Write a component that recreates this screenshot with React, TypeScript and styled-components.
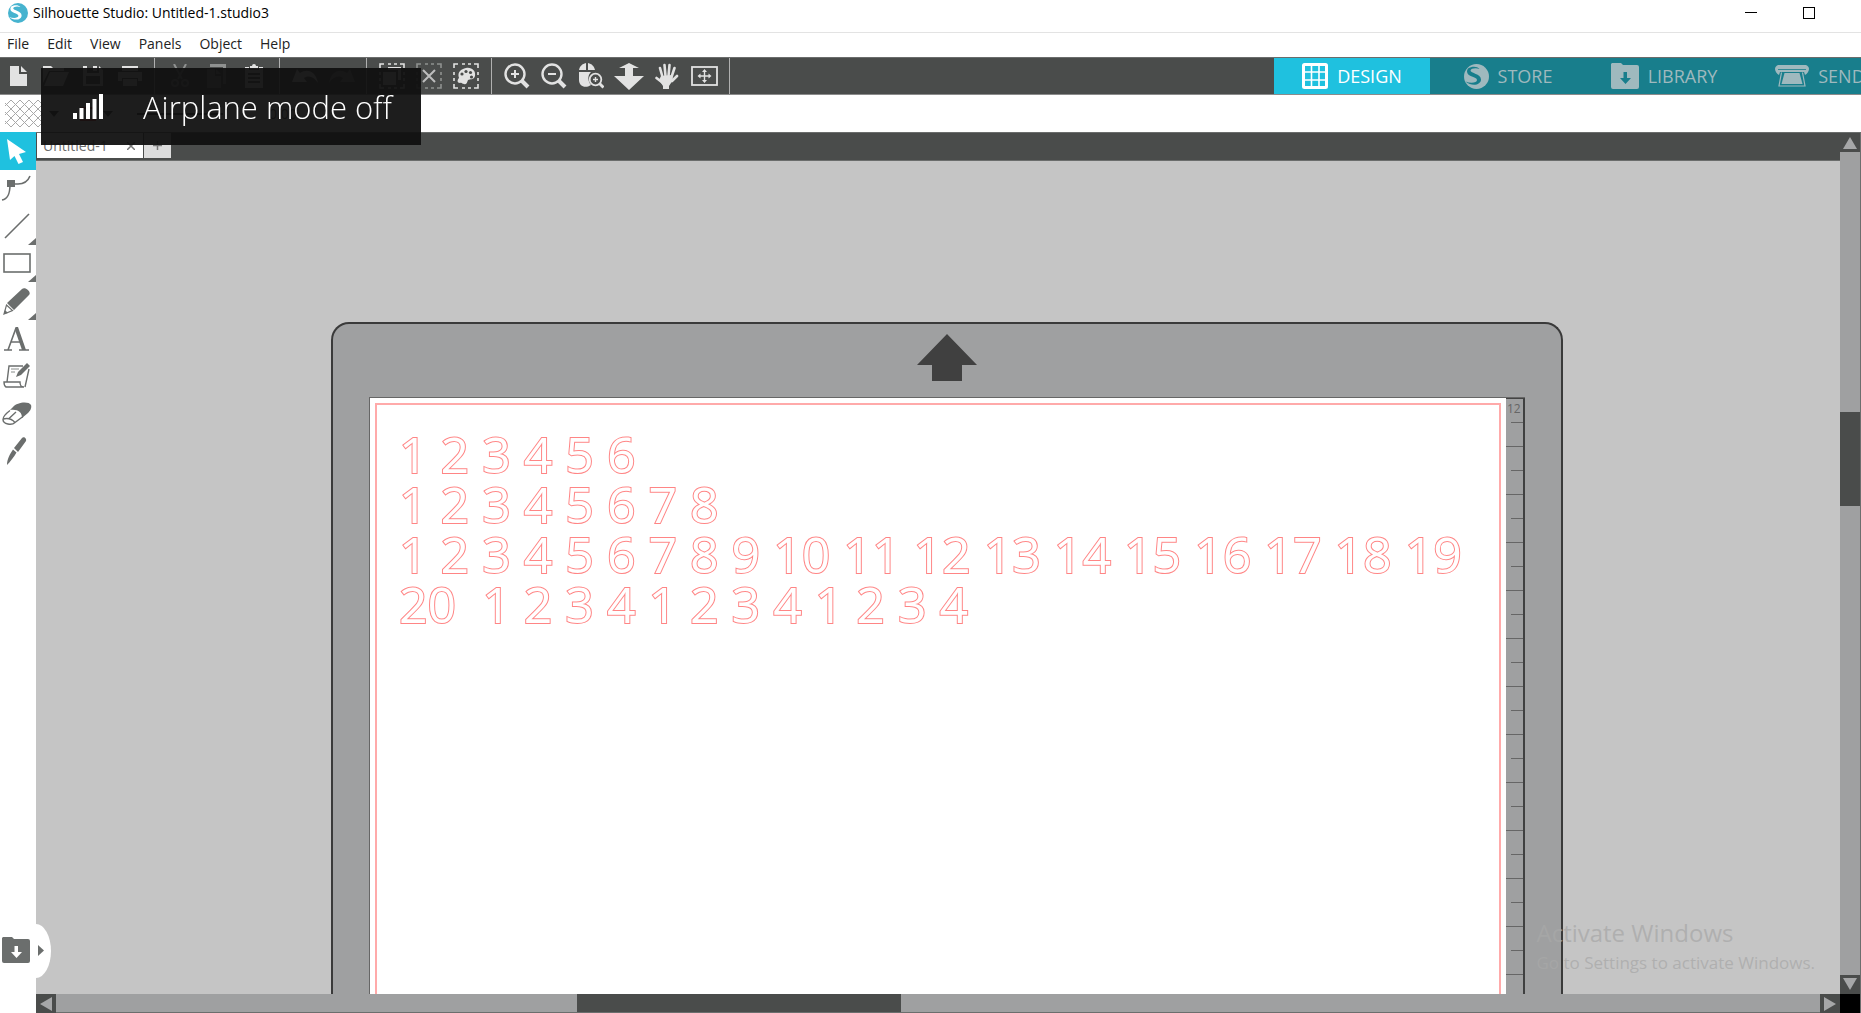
import React from 'react';
import styled, { createGlobalStyle, css } from 'styled-components';

const c = {
  bar: '#4a4c4b',
  barEdge: '#6b6d6c',
  light: '#e2e2e2',
  dim: '#8f9190',
  cyan: '#1fc1df',
  teal: '#187e8c',
  tealInk: '#9fb9be',
  canvas: '#c5c5c5',
  mat: '#9fa0a1',
  tool: '#6b6e6d',
  cut: '#ff8585',
};
const ui = `'Open Sans', 'Noto Sans', sans-serif`;

const Global = createGlobalStyle`
  *, *::before, *::after { box-sizing: border-box; }
  body { margin: 0; background: #fff; font-family: ${ui}; overflow: hidden; }
  button { font: inherit; padding: 0; border: 0; background: none; color: inherit; }
  svg { display: block; flex: none; }
`;

const Window = styled.div`
  height: 100vh;
  display: flex;
  flex-direction: column;
  background: #fff;
`;
const TitleBar = styled.header`
  display: flex;
  align-items: center;
  height: 33px;
  padding: 0 0 7px 8px;
  border-bottom: 1px solid #e3e3e3;
  gap: 5px;
`;
const Logo = styled.span`
  color: #46b3cf;
`;
const Title = styled.h1`
  flex: 1;
  margin: 0;
  font-size: 14px;
  line-height: 20px;
  font-weight: 400;
  color: #000;
`;
const WindowButtons = styled.div`
  display: flex;
  padding-right: 23px;
`;
const WindowButton = styled.button`
  width: 58px;
  height: 24px;
  display: grid;
  place-items: center;
`;
const MenuBar = styled.nav`
  display: flex;
  align-items: center;
  height: 24px;
  padding: 0 7px 2px;
  gap: 18px;
`;
const MenuItem = styled.button`
  font-size: 14px;
  line-height: 20px;
  color: #222;
`;
const Toolbar = styled.div`
  display: flex;
  height: 38px;
  background: ${c.bar};
  border-top: 1px solid ${c.barEdge};
  border-bottom: 1px solid #8b8b8b;
`;
const ToolGroup = styled.div<{ $width: number; $lead?: number }>`
  display: grid;
  grid-auto-flow: column;
  grid-auto-columns: 1fr;
  width: ${(p) => p.$width}px;
  padding: 0 6px 0 ${(p) => p.$lead ?? 6}px;
  border-right: 1px solid #b0b0b0;
`;
const ToolButton = styled.button<{ $dim?: boolean }>`
  display: grid;
  place-items: center;
  color: ${(p) => (p.$dim ? c.dim : c.light)};
`;
const Modes = styled.nav`
  display: flex;
  margin-left: auto;
  width: 587px;
  overflow: hidden;
  background: ${c.teal};
`;
const ModeButton = styled.button<{ $active?: boolean }>`
  display: flex;
  flex: none;
  align-items: center;
  justify-content: center;
  gap: 9px;
  width: 156px;
  font-size: 18px;
  line-height: 24px;
  color: ${(p) => (p.$active ? '#fff' : c.tealInk)};
  background: ${(p) => (p.$active ? c.cyan : 'transparent')};
`;
const StyleBar = styled.div`
  display: flex;
  align-items: center;
  height: 37px;
  padding-left: 5px;
  gap: 6px;
  color: #333;
`;
const LineStyle = styled.div`
  width: 86px;
  height: 2px;
  margin: 0 40px 0 18px;
  background: #333;
`;
const Thickness = styled.input`
  width: 100px;
  border: 0;
  padding: 0;
  font: 14px ${ui};
  color: #333;
`;
const Workspace = styled.div`
  flex: 1;
  min-height: 0;
  display: grid;
  grid-template-columns: 36px minmax(0, 1fr) 20px;
  border-right: 1px solid ${c.tool};
`;
const Sidebar = styled.aside`
  position: relative;
  background: #fff;
  display: flex;
  flex-direction: column;
`;
const ToolList = styled.div`
  display: grid;
  grid-template-rows: repeat(9, 1fr);
  height: 338px;
`;
const SideButton = styled.button<{ $active?: boolean; $more?: boolean }>`
  position: relative;
  display: flex;
  align-items: center;
  padding-left: 1px;
  color: ${(p) => (p.$active ? '#fff' : c.tool)};
  background: ${(p) => (p.$active ? c.cyan : '#fff')};
  ${(p) =>
    p.$more &&
    css`
      &::after {
        content: '';
        position: absolute;
        right: 0;
        bottom: 0;
        border-left: 8px solid transparent;
        border-bottom: 7px solid ${c.tool};
      }
    `}
`;
const LibraryHandle = styled.button`
  position: absolute;
  left: 0;
  bottom: 35px;
  z-index: 2;
  display: flex;
  align-items: center;
  gap: 8px;
  width: 51px;
  height: 54px;
  padding: 0 0 2px 2px;
  background: #fff;
  color: ${c.tool};
  border-radius: 0 15px 15px 0 / 0 27px 27px 0;
`;
const Center = styled.div`
  display: flex;
  flex-direction: column;
  min-width: 0;
`;
const Tabs = styled.div`
  display: flex;
  height: 29px;
  gap: 1px;
  padding: 0 0 2px 1px;
  background: ${c.bar};
  border-top: 1px solid ${c.barEdge};
  border-bottom: 1px solid ${c.barEdge};
`;
const Tab = styled.div`
  display: flex;
  align-items: center;
  justify-content: space-between;
  width: 106px;
  padding: 0 8px 0 6px;
  background: #fff;
  color: #6b6b6b;
  font-size: 14px;
  line-height: 20px;
`;
const TabButton = styled.button`
  display: grid;
  place-items: center;
  color: #777;
`;
const AddTab = styled(TabButton)`
  width: 27px;
  background: #dcdcdc;
`;
const Canvas = styled.main`
  position: relative;
  flex: 1;
  min-height: 0;
  display: flex;
  overflow: hidden;
  padding: 161px 277px 0 295px;
  background: ${c.canvas};
`;
const Mat = styled.section`
  flex: 1;
  min-width: 0;
  display: flex;
  flex-direction: column;
  padding: 10px 36px 0;
  background: ${c.mat};
  border: 2px solid #3a3a3a;
  border-bottom: 0;
  border-radius: 18px 18px 0 0;
`;
const FeedArrow = styled.svg`
  align-self: center;
  margin-bottom: 16px;
`;
const Sheet = styled.div`
  flex: 1;
  display: flex;
  border: 1px solid #666;
  border-width: 1px 0 0 1px;
`;
const Page = styled.div`
  flex: 1;
  min-width: 0;
  display: flex;
  padding: 5px 5px 0;
  background: #fff;
`;
const CutArea = styled.div`
  flex: 1;
  min-width: 0;
  padding: 24px 22px;
  border: 2px solid #ffaaaa;
  border-bottom: 0;
`;
const Numbers = styled.p`
  margin: 0;
  font-family: 'Open Sans', 'Noto Sans', sans-serif;
  font-size: 50px;
  line-height: 50px;
  white-space: pre;
  color: #fff;
  -webkit-text-stroke: 2px ${c.cut};
  paint-order: stroke fill;
`;
const Ruler = styled.div`
  width: 19px;
  padding: 3px 0 0 1px;
  overflow: hidden;
  font-size: 12px;
  line-height: 14px;
  color: #666;
  border-top: 1px solid #444;
  border-right: 2px solid #3f4040;
  background:
    repeating-linear-gradient(transparent 0 47px, #666 47px 48px) 0 0 / 100% 100%,
    repeating-linear-gradient(transparent 0 23px, #666 23px 24px) 5px 0 / 100% 100% no-repeat;
`;
const Watermark = styled.div`
  position: absolute;
  right: 25px;
  bottom: 17px;
  color: rgba(168, 168, 168, 0.75);
  font-size: 17px;
  line-height: 28px;
`;
const WatermarkTitle = styled.div`
  font-size: 24px;
  line-height: 32px;
`;
const Bar = styled.div<{ $vertical?: boolean }>`
  display: flex;
  flex-direction: ${(p) => (p.$vertical ? 'column' : 'row')};
  ${(p) => (p.$vertical ? 'border-top' : 'border-bottom')}: 1px solid ${c.tool};
  background: ${c.mat};
  ${(p) => (p.$vertical ? '' : 'height: 19px;')}
`;
const Track = styled.div<{ $share: number }>`
  flex: ${(p) => p.$share} 1 0;
`;
const Thumb = styled(Track)`
  background: ${c.bar};
`;
const ScrollButton = styled.button`
  flex: none;
  width: 20px;
  height: 19px;
  display: grid;
  place-items: center;
  background: ${c.bar};
  color: #a6a7a8;
`;
const Corner = styled.div`
  height: 19px;
  background: #000;
`;
const Toast = styled.div`
  position: fixed;
  left: 41px;
  top: 68px;
  z-index: 5;
  display: flex;
  align-items: center;
  gap: 40px;
  width: 380px;
  height: 77px;
  padding: 0 0 0 32px;
  background: rgba(16, 16, 16, 0.945);
  color: #fff;
  font-size: 31px;
  font-weight: 300;
  line-height: 40px;
  white-space: nowrap;
`;

type IconProps = { w: number; h: number; children: React.ReactNode };
const Icon = ({ w, h, children }: IconProps) => (
  <svg width={w} height={h} viewBox={`0 0 ${w} ${h}`} fill="currentColor" aria-hidden="true">
    {children}
  </svg>
);
const line = (width = 2) => ({ fill: 'none', stroke: 'currentColor', strokeWidth: width });

const Dashed = () => (
  <path d="M1 5V1h4M9 1h3M15 1h3M21 1h4v4M25 9v3M25 15v3M25 21v4h-4M18 25h-3M12 25H9M5 25H1v-4M1 18v-3M1 12V9" {...line(1.6)} />
);

const NewDoc = () => (
  <Icon w={17} h={20}><path d="M0 0h9v8h8v12H0zM11 0l6 6h-6z" /></Icon>
);
const Folder = () => (
  <Icon w={26} h={20}><path d="M0 0h8l2 2h11v3H6L0 17zM7 6h19l-6 14H1z" /></Icon>
);
const Save = () => (
  <Icon w={20} h={20}><path fillRule="evenodd" d="M0 0h4v7h12V0l4 4v16H0zM10 0h4v5h-4zM3 10h14v8H3z" /></Icon>
);
const Print = () => (
  <Icon w={24} h={20}><path d="M4 0h16v5H4zM0 6h24v9h-4v-3H4v3H0zM5 13h14v7H5z" /></Icon>
);
const Cut = () => (
  <Icon w={18} h={24}>
    <path d="M3 0l8 15M15 0L7 15" {...line(2)} />
    <circle cx="4" cy="19" r="3" {...line(2)} /><circle cx="14" cy="19" r="3" {...line(2)} />
  </Icon>
);
const Copy = () => (
  <Icon w={19} h={24}><path d="M3 0h16v20h-3V3H3zM0 5h8v7h6v12H0zM9 5l5 5H9z" /></Icon>
);
const Paste = () => (
  <Icon w={18} h={24}><path fillRule="evenodd" d="M0 3h4v3h10V3h4v21H0zM5 2h2a2 2 0 014 0h2v3H5zM3 9h12v2H3zM3 13h12v2H3zM3 17h12v2H3z" /></Icon>
);
const Undo = () => (
  <Icon w={26} h={16}><path d="M0 14L5 1l3 4c7-5 16-2 18 10-4-6-9-8-14-5l3 4z" /></Icon>
);
const Redo = () => (
  <Icon w={26} h={16}><path d="M26 14L21 1l-3 4C11 0 2 3 0 15c4-6 9-8 14-5l-3 4z" /></Icon>
);
const SelectAll = () => (
  <Icon w={26} h={26}><Dashed /><path d="M4 9h13v13H4zM9 4h13v13h-3V7H9z" /></Icon>
);
const Deselect = () => (
  <Icon w={26} h={26}><Dashed /><path d="M7 7l12 12M19 7L7 19" stroke="#bdbdbd" strokeWidth="2" /></Icon>
);
const Palette = () => (
  <Icon w={26} h={26}>
    <Dashed />
    <path d="M13 5c6-1 10 3 9 8-1 4-5 3-7 4-1 2-1 5-4 4-2 0-2-2-4-1-3 0-3-3-1-5C4 9 8 6 13 5z" />
    <g fill={c.bar}><circle cx="9" cy="11" r="1.6" /><circle cx="13" cy="8.5" r="1.6" /><circle cx="17.5" cy="9.5" r="1.6" /><circle cx="18.5" cy="14" r="1.6" /></g>
  </Icon>
);
const Zoom = ({ plus }: { plus?: boolean }) => (
  <Icon w={26} h={26}>
    <circle cx="11" cy="11" r="9.5" {...line(2.4)} />
    <path d="M17.5 17.5l6.5 6.5" {...line(4)} />
    <path d={plus ? 'M7 11h8M11 7v8' : 'M7 11h8'} {...line(2)} />
  </Icon>
);
const ZoomMouse = () => (
  <Icon w={25} h={26}>
    <path d="M7 0v7H0C1 3 3 1 7 0zM9 0c4 1 6 3 7 7H9zM0 9h12c-3 3-4 8 0 13-6 4-12 1-12-5z" />
    <circle cx="16.5" cy="16.5" r="5.8" {...line(1.8)} />
    <path d="M20.5 20.5l4 4" {...line(3)} /><path d="M14 16.5h5M16.500 14v5" {...line(1.4)} />
  </Icon>
);
const FitArrow = () => (
  <Icon w={30} h={27}><path d="M15 0l10 5h-6v8h11L15 27 0 13h11V5H5z" /></Icon>
);
const Hand = () => (
  <Icon w={24} h={26}>
    <g fill="none" stroke="currentColor" strokeWidth="2.600" strokeLinecap="round">
      <path d="M7.500 14L5 5M10.500 13L9.500 2M13.500 13l1-11M16.500 14l3-9M17 18l5-5M8 20l-6.500-5" />
    </g>
    <path d="M6 13l11-1 1 5-4 6v3H8v-3l-4-6z" />
  </Icon>
);
const Frame = () => (
  <Icon w={27} h={20}>
    <rect x="1" y="1" width="25" height="18" {...line(1.8)} />
    <path d="M8 10h11M13.500 5v10" {...line(1.4)} />
    <path d="M13.500 3l2.500 3h-5zM13.500 17l2.500-3h-5zM6.500 10l3-2.500v5zM20.500 10l-3-2.500v5z" />
  </Icon>
);
const Grid = () => (
  <Icon w={26} h={26}>
    <rect x="1.500" y="1.500" width="23" height="23" rx="1" {...line(3)} />
    <path d="M9.500 2v22M17 2v22M2 9h22M2 17h22" {...line(1.6)} />
  </Icon>
);
const Globe = ({ size, ink }: { size: number; ink: string }) => (
  <svg width={size} height={size} viewBox="0 0 25 25" fill="currentColor" aria-hidden="true">
    <circle cx="12.500" cy="12.500" r="12.500" />
    <path d="M4 4.500C8 2 13 2 15.500 5c-4-1.500-8.500-.5-9 1.500 0 3 10.500 3 10.500 9 0 5.500-9 7.500-15.500 2 5 2 11.500 1.500 11.500-1.500C13 12.500 3 13 3 7.500c0-1 .3-2 1-3z" fill={ink} />
  </svg>
);
const FolderDown = ({ ink }: { ink: string }) => (
  <Icon w={28} h={26}>
    <path d="M1 0h9l2 2h14a2 2 0 012 2v20a2 2 0 01-2 2H2a2 2 0 01-2-2V1z" />
    <path d="M12.500 9h3.500v6h4l-5.500 6L9 15h3.500z" fill={ink} />
  </Icon>
);
const Cutter = () => (
  <Icon w={34} h={22}>
    <path d="M3 0h28c2 1 3 2 3 4s-2 5-4 6l-1-3H5l-1 3C2 9 0 6 0 4s1-3 3-4z" />
    <path d="M3 4.500h28" stroke={c.teal} strokeWidth=".8" />
    <path d="M9.500 8h15l3 11h-21z" />
    <path d="M6.500 7.500L4 21h26L27.500 7.500" {...line(1.2)} />
  </Icon>
);
const Hatch = () => (
  <Icon w={38} h={27}>
    <path
      d="M0 6l6-6M0 15L15 0M0 24L24 0M6 27L33 0M15 27L38 4M24 27l14-14M33 27l5-5M0 21l6 6M0 12l15 15M0 3l24 24M6 0l27 27M15 0l23 23M24 0l14 14M33 0l5 5"
      fill="none" stroke="#a8a8a8" strokeWidth="1"
    />
  </Icon>
);
const Caret = () => <Icon w={10} h={6}><path d="M0 0h10L5 6z" /></Icon>;
const Signal = () => (
  <Icon w={30} h={25}><path d="M0 19h4v6H0zM6.500 14h4v11h-4zM13 9h4v16h-4zM19.500 5h4v20h-4zM26 0h4v25h-4z" /></Icon>
);

const Pointer = () => (
  <Icon w={32} h={32}><path d="M6 4l19 13-7 2 4 8-4.500 2-4-8L9 25z" /></Icon>
);
const EditNode = () => (
  <Icon w={32} h={28}>
    <path d="M1 26c6-1 8-6 8-16h8c7 0 10-3 12-8" {...line(1.600)} /><path d="M6 6h8v7H6z" />
  </Icon>
);
const LineTool = () => <Icon w={32} h={28}><path d="M4 26L28 2" {...line(1.6)} /></Icon>;
const RectTool = () => <Icon w={32} h={26}><rect x="3" y="4" width="26" height="18" {...line(1.6)} /></Icon>;
const Pencil = () => (
  <Icon w={32} h={28}>
    <path d="M21 2c3-3 10 3 7 6L13 23l-7-7z" /><path d="M5.500 18l6 5.500L3 27z" {...line(1.200)} /><path d="M3 27l1-4 3 3z" />
  </Icon>
);
const TextTool = () => (
  <Icon w={32} h={26}>
    <path d="M15 2L7 24M9.500 16h12" {...line(1.600)} /><path d="M14.500 1h2.500l8 23h-4L14 4z" />
    <path d="M3 24h8M18 24h10" {...line(1.600)} />
  </Icon>
);
const Sketch = () => (
  <Icon w={32} h={28}>
    <path d="M22 4H8L6 20M28 7l-4 18M3 20h16c0 4 1 5 4 5H5c-2-1-2-3-2-5z" {...line(1.400)} />
    <path d="M10 7h8M10 10h4" {...line(.8)} />
    <path d="M26 1l3 3-9 9-5 2 2-5z" />
  </Icon>
);
const Eraser = () => (
  <Icon w={32} h={26}>
    <path d="M12 6c4-5 16-6 18-2 1 3-1 6-3 8l-6 5c0-6-4-9-12-8z" />
    <path d="M9 9.500c-4 3-7 6-7 9 0 5 9 6 12 3l8-6M2 18c4-1 9 0 12 3.500M8 17.500L15 11" {...line(1.400)} />
  </Icon>
);
const Knife = () => (
  <Icon w={32} h={30}><path d="M21 2c2-2 5 1 4 3l-8 11-4-4zM12 13.500l3.500 3C13 21 9 26 6 29c0-6 3-11 6-15.500z" /></Icon>
);

const sideTools: { name: string; icon: React.ReactNode; more?: boolean }[] = [
  { name: 'Select', icon: <Pointer /> },
  { name: 'Edit points', icon: <EditNode /> },
  { name: 'Line', icon: <LineTool />, more: true },
  { name: 'Rectangle', icon: <RectTool />, more: true },
  { name: 'Freehand', icon: <Pencil />, more: true },
  { name: 'Text', icon: <TextTool /> },
  { name: 'Sketch', icon: <Sketch /> },
  { name: 'Eraser', icon: <Eraser /> },
  { name: 'Knife', icon: <Knife /> },
];

type Tool = [name: string, icon: React.ReactNode, dim?: boolean];
const groups: { width: number; lead?: number; tools: Tool[] }[] = [
  { width: 155, lead: 0, tools: [['New', <NewDoc />], ['Open', <Folder />], ['Save', <Save />], ['Print', <Print />]] },
  { width: 125, tools: [['Cut', <Cut />, true], ['Copy', <Copy />, true], ['Paste', <Paste />]] },
  { width: 87, tools: [['Undo', <Undo />], ['Redo', <Redo />, true]] },
  { width: 125, tools: [['Select all', <SelectAll />], ['Deselect', <Deselect />, true], ['Select by color', <Palette />]] },
  {
    width: 238,
    tools: [
      ['Zoom in', <Zoom plus />], ['Zoom out', <Zoom />], ['Zoom selection', <ZoomMouse />],
      ['Drag zoom', <FitArrow />], ['Pan', <Hand />], ['Fit to page', <Frame />],
    ],
  },
];

const rows = [
  '1 2 3 4 5 6',
  '1 2 3 4 5 6 7 8',
  '1 2 3 4 5 6 7 8 9 10 11 12 13 14 15 16 17 18 19',
  '20  1 2 3 4 1 2 3 4 1 2 3 4',
];

export default function App() {
  return (
    <Window>
      <Global />
      <TitleBar>
        <Logo><Globe size={20} ink="#fff" /></Logo>
        <Title>Silhouette Studio: Untitled-1.studio3</Title>
        <WindowButtons>
          <WindowButton aria-label="Minimize"><Icon w={12} h={12}><path d="M0 5h12v1H0z" /></Icon></WindowButton>
          <WindowButton aria-label="Maximize"><Icon w={12} h={12}><rect x=".5" y=".5" width="11" height="11" {...line(1)} /></Icon></WindowButton>
        </WindowButtons>
      </TitleBar>
      <MenuBar>
        {['File', 'Edit', 'View', 'Panels', 'Object', 'Help'].map((m) => <MenuItem key={m}>{m}</MenuItem>)}
      </MenuBar>
      <Toolbar>
        {groups.map((g, i) => (
          <ToolGroup key={i} $width={g.width} $lead={g.lead}>
            {g.tools.map(([name, icon, dim]) => (
              <ToolButton key={name} aria-label={name} $dim={dim}>{icon}</ToolButton>
            ))}
          </ToolGroup>
        ))}
        <Modes>
          <ModeButton $active><Grid />DESIGN</ModeButton>
          <ModeButton><Globe size={25} ink={c.teal} />STORE</ModeButton>
          <ModeButton><FolderDown ink={c.teal} />LIBRARY</ModeButton>
          <ModeButton><Cutter />SEND</ModeButton>
        </Modes>
      </Toolbar>
      <StyleBar>
        <Hatch />
        <Caret />
        <Icon w={32} h={14}><rect x="16" y="1" width="14" height="12" fill="none" stroke="#d33" strokeWidth="2" /></Icon>
        <Caret />
        <LineStyle />
        <Thickness aria-label="Line thickness" defaultValue="0.00" />
      </StyleBar>
      <Workspace>
        <Sidebar>
          <ToolList>
            {sideTools.map((t, i) => (
              <SideButton key={t.name} aria-label={t.name} $active={i === 0} $more={t.more}>{t.icon}</SideButton>
            ))}
          </ToolList>
          <LibraryHandle aria-label="Open library">
            <FolderDown ink="#fff" />
            <Icon w={6} h={11}><path d="M0 0l6 5.500L0 11z" /></Icon>
          </LibraryHandle>
        </Sidebar>
        <Center>
          <Tabs>
            <Tab>
              Untitled-1
              <TabButton aria-label="Close tab"><Icon w={8} h={8}><path d="M0 0l8 8M8 0L0 8" {...line(1.500)} /></Icon></TabButton>
            </Tab>
            <AddTab aria-label="New tab"><Icon w={9} h={9}><path d="M0 4.500h9M4.500 0v9" {...line(1.500)} /></Icon></AddTab>
          </Tabs>
          <Canvas>
            <Mat>
              <FeedArrow width="60" height="47" viewBox="0 0 60 47" fill="#404040">
                <path d="M30 0l30 31H45v16H15V31H0z" />
              </FeedArrow>
              <Sheet>
                <Page>
                  <CutArea>
                    {rows.map((r) => <Numbers key={r}>{r}</Numbers>)}
                  </CutArea>
                </Page>
                <Ruler>12</Ruler>
              </Sheet>
            </Mat>
            <Watermark>
              <WatermarkTitle>Activate Windows</WatermarkTitle>
              Go to Settings to activate Windows.
            </Watermark>
          </Canvas>
          <Bar>
            <ScrollButton aria-label="Scroll left"><Icon w={12} h={14}><path d="M12 0v14L0 7z" /></Icon></ScrollButton>
            <Track $share={521} /><Thumb $share={324} /><Track $share={920} />
            <ScrollButton aria-label="Scroll right"><Icon w={12} h={14}><path d="M0 0v14l12-7z" /></Icon></ScrollButton>
          </Bar>
        </Center>
        <Bar $vertical>
          <ScrollButton aria-label="Scroll up"><Icon w={14} h={12}><path d="M0 12h14L7 0z" /></Icon></ScrollButton>
          <Track $share={260} /><Thumb $share={94} /><Track $share={468} />
          <ScrollButton aria-label="Scroll down"><Icon w={14} h={12}><path d="M0 0h14L7 12z" /></Icon></ScrollButton>
          <Corner />
        </Bar>
      </Workspace>
      <Toast role="status"><Signal />Airplane mode off</Toast>
    </Window>
  );
}
